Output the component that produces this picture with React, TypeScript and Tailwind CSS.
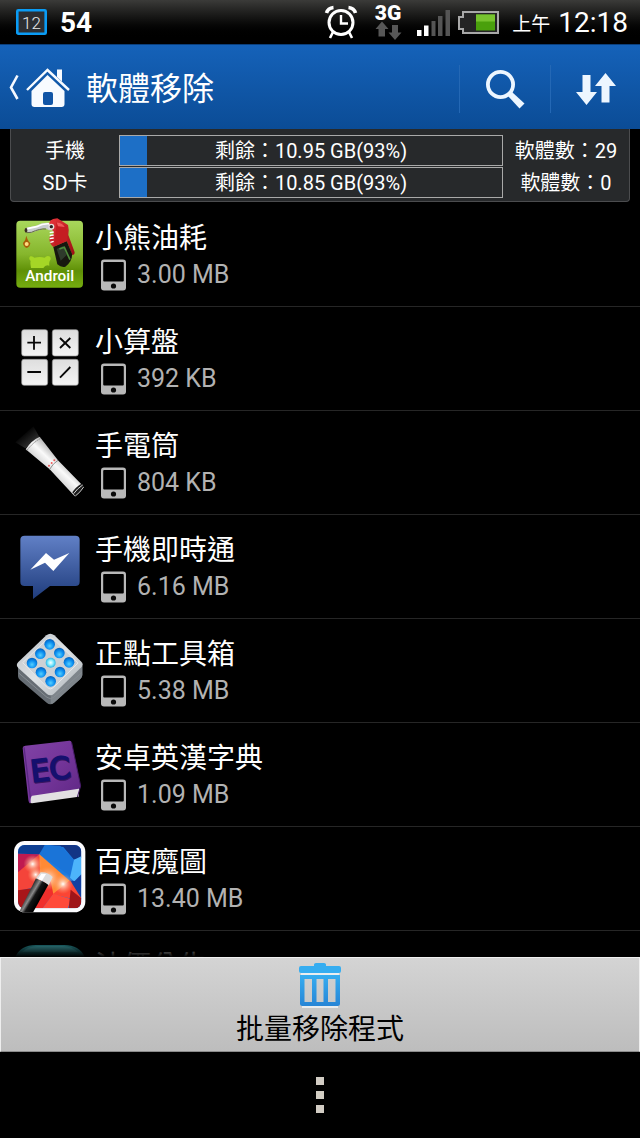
import React from 'react';

interface AppItem {
  id: string;
  name: string;
  size?: string;
  icon: React.ReactNode;
}

interface StorageItem {
  label: string;
  text: string;
  used: number;
  count: string;
}

const FuelIcon = () => (
  <svg className="h-full w-full" viewBox="42 36 216 216" aria-hidden="true">
    <defs>
      <linearGradient id="fuelBg" x1="0" y1="0" x2="0" y2="1">
        <stop offset="0" stopColor="#a9d75c" />
        <stop offset="0.5" stopColor="#86b62c" />
        <stop offset="0.75" stopColor="#5f9006" />
        <stop offset="1" stopColor="#76ad10" />
      </linearGradient>
      <linearGradient id="fuelHandle" x1="0" y1="0" x2="1" y2="1">
        <stop offset="0" stopColor="#e8343a" />
        <stop offset="1" stopColor="#9c1014" />
      </linearGradient>
    </defs>
    <rect x="49" y="47" width="200" height="201" rx="12" fill="url(#fuelBg)" />
    <path d="M93 189 Q90 172 92 168 Q84 160 91 154 Q98 152 103 158 Q120 154 134 158 Q140 151 148 154 Q156 160 149 168 Q146 175 148 182 Q136 178 130 189 Z" fill="#a5d626" />
    <path d="M77 78 Q76 68 86 67 L108 62 Q128 50 152 54 L162 60 L160 76 L146 76 Q134 64 120 74 L92 83 Z" fill="#c9cdd0" />
    <path d="M82 71 L110 65 Q130 54 152 57" stroke="#fff" strokeWidth="5" fill="none" />
    <path d="M80 83 L94 82 Q120 70 138 72" stroke="#65684e" strokeWidth="3" fill="none" />
    <ellipse cx="78" cy="76" rx="4" ry="7" fill="#3a2c24" />
    <path d="M79 92 Q83 108 91 114 Q90 126 80 129 Q70 125 69 114 Q77 107 79 92 Z" fill="#a95c08" />
    <circle cx="80" cy="117" r="6" fill="#ffdc80" />
    <path d="M150 62 Q142 42 172 40 L204 60 Q208 76 205 90 L224 142 Q224 150 217 150 L200 108 L160 126 Q148 116 148 98 L162 84 Z" fill="url(#fuelHandle)" />
    <path d="M160 126 L200 108 L216 146 Q218 168 196 185 Q184 188 172 178 Z" fill="#17170f" />
    <path d="M170 132 L190 123 L200 150 L182 167 Z" fill="#2e3a2b" />
    <path d="M178 132 L193 127 L210 164" stroke="#4d8a3b" strokeWidth="5" fill="none" />
    <path d="M170 50 L200 64 L202 108 L164 124 L166 88 Z" fill="#c51d22" />
    <path d="M170 52 Q190 56 194 66 L174 64 Z" fill="#f0595a" />
    <circle cx="154" cy="65" r="9" fill="#e5e0dc" />
    <circle cx="154" cy="65" r="5" fill="#2b2020" />
    <path d="M149 83 L161 81 M149 92 L161 90 M149 101 L161 99 M151 112 L161 109" stroke="#fff" strokeWidth="4" />
    <text x="149" y="228" textAnchor="middle" fontFamily="Roboto, sans-serif" fontWeight="500" fontSize="46" fill="#fff">Androil</text>
  </svg>
);

const CalcIcon = () => (
  <svg className="h-full w-full" viewBox="42 32 216 216" aria-hidden="true">
    <defs>
      <linearGradient id="calcKey" x1="0" y1="0" x2="0" y2="1">
        <stop offset="0" stopColor="#dedede" />
        <stop offset="1" stopColor="#f4f4f4" />
      </linearGradient>
    </defs>
    <g fill="url(#calcKey)" stroke="#9a9a9a" strokeWidth="2">
      <rect x="65" y="58" width="78" height="79" rx="7" />
      <rect x="157" y="58" width="78" height="79" rx="7" />
      <rect x="65" y="147" width="78" height="78" rx="7" />
      <rect x="157" y="147" width="78" height="78" rx="7" />
    </g>
    <path d="M82 97 H123 M102 77 V118 M180 83 L211 113 M211 83 L180 113 M82 185 H123 M180 202 L211 170" stroke="#080808" strokeWidth="5.5" fill="none" />
  </svg>
);

const TorchIcon = () => (
  <svg className="h-full w-full" viewBox="42 28 216 216" aria-hidden="true">
    <defs>
      <linearGradient id="torchBody" gradientUnits="userSpaceOnUse" x1="107" y1="160" x2="160" y2="105">
        <stop offset="0" stopColor="#7a7a7a" />
        <stop offset="0.35" stopColor="#dcdcdc" />
        <stop offset="0.65" stopColor="#fafafa" />
        <stop offset="1" stopColor="#b9b9b9" />
      </linearGradient>
      <linearGradient id="torchBeam" gradientUnits="userSpaceOnUse" x1="98" y1="80" x2="72" y2="48">
        <stop offset="0" stopColor="#2c2c2c" />
        <stop offset="1" stopColor="#000" />
      </linearGradient>
    </defs>
    <path d="M76 98 L118 63 L100 32 L46 80 Z" fill="url(#torchBeam)" />
    <path d="M77 101 Q93 75 119 63 L174 134 L250 212 Q240 232 224 242 L149 161 Z" fill="url(#torchBody)" />
    <path d="M81 104 Q98 81 122 68" stroke="#777" strokeWidth="2.5" fill="none" strokeDasharray="5 2" />
    <path d="M149 161 Q159 143 174 134" stroke="#8c8c8c" strokeWidth="3" fill="none" />
    <path d="M217 230 Q225 216 244 204 L252 213 Q242 231 226 242 Z" fill="#1a1a1a" />
    <path d="M221 234 Q231 219 248 208" stroke="#d7d7d7" strokeWidth="3" fill="none" />
    <path d="M226 241 Q241 230 251 214" stroke="#c4c4c4" strokeWidth="3" fill="none" />
    <g fill="#ee5a5a">
      <circle cx="147" cy="150" r="3" />
      <circle cx="155" cy="142" r="3" />
      <circle cx="163" cy="134" r="3" />
    </g>
  </svg>
);

const MessengerIcon = () => (
  <svg className="h-full w-full" viewBox="42 26 216 216" aria-hidden="true">
    <defs>
      <linearGradient id="chatBg" x1="0" y1="0" x2="0" y2="1">
        <stop offset="0" stopColor="#6180c6" />
        <stop offset="1" stopColor="#1f3c7c" />
      </linearGradient>
    </defs>
    <path d="M74 46 H226 Q239 46 239 58 V184 Q239 197 226 197 H150 L99 236 V197 H74 Q61 197 61 184 V58 Q61 46 74 46 Z" fill="url(#chatBg)" />
    <path d="M91 148 L138 98 L162 118 L208 98 L160 152 L135 127 Z" fill="#fff" />
  </svg>
);

const ToolboxIcon = () => (
  <svg className="h-full w-full" viewBox="42 38 216 216" aria-hidden="true">
    <defs>
      <linearGradient id="boxTop" x1="0" y1="0" x2="1" y2="1">
        <stop offset="0" stopColor="#b9bec3" />
        <stop offset="0.5" stopColor="#dfe3e6" />
        <stop offset="1" stopColor="#a9afb4" />
      </linearGradient>
      <radialGradient id="boxDot" cx="0.5" cy="0.65" r="0.6">
        <stop offset="0" stopColor="#55d0ff" />
        <stop offset="0.6" stopColor="#0c8ff0" />
        <stop offset="1" stopColor="#0466c4" />
      </radialGradient>
      <radialGradient id="boxGlow">
        <stop offset="0" stopColor="#fff" />
        <stop offset="0.5" stopColor="#8defff" />
        <stop offset="1" stopColor="#29b5e8" />
      </radialGradient>
    </defs>
    <path d="M54 136 V168 Q54 174 60 179 L140 247 Q151 256 162 247 L241 176 Q247 170 247 164 V136 Z" fill="#666d74" />
    <path d="M152 218 L247 136 V164 Q247 170 241 176 L162 247 Q157 251 152 251 Z" fill="#7e858b" />
    <path d="M56 158 L141 231 Q151 239 161 231 L246 156" stroke="#868d93" strokeWidth="3" fill="none" />
    <path d="M55 125 L139 45 Q151 36 163 45 L244 124 Q252 132 244 141 L162 220 Q151 229 140 220 L55 143 Q46 134 55 125 Z" fill="url(#boxTop)" />
    <path d="M68 127 L142 56 Q151 48 160 56 L234 128 L160 202 Q151 210 142 202 Z" fill="#ccd1d5" stroke="#e4e7ea" strokeWidth="3" />
    <g fill="url(#boxDot)">
      <circle cx="149" cy="72" r="16" />
      <circle cx="121" cy="100" r="16" />
      <circle cx="178" cy="98" r="16" />
      <circle cx="96" cy="128" r="16" />
      <circle cx="207" cy="126" r="16" />
      <circle cx="123" cy="156" r="16" />
      <circle cx="180" cy="155" r="16" />
      <circle cx="152" cy="183" r="16" />
    </g>
    <circle cx="152" cy="127" r="15" fill="url(#boxGlow)" />
  </svg>
);

const DictionaryIcon = () => (
  <svg className="h-full w-full" viewBox="42 33 216 216" aria-hidden="true">
    <defs>
      <linearGradient id="bookCover" x1="0" y1="0" x2="1" y2="1">
        <stop offset="0" stopColor="#8143a6" />
        <stop offset="0.5" stopColor="#743599" />
        <stop offset="1" stopColor="#5d2683" />
      </linearGradient>
    </defs>
    <path d="M89 207 L238 184 L236 212 L96 232 Q88 232 88 222 Z" fill="#e2e0e2" />
    <path d="M68 66 Q68 60 76 59 L208 44 Q214 43 215 50 L242 180 Q242 187 236 188 L97 209 Q91 211 92 232 Q87 233 85 222 Z" fill="url(#bookCover)" />
    <path d="M72 64 L91 214" stroke="#5c2884" strokeWidth="4" fill="none" />
    <path d="M215 50 L242 180 L232 213" stroke="#451b66" strokeWidth="3" fill="none" />
    <g fontFamily="'DejaVu Sans', sans-serif" fontSize="90" strokeWidth="5">
      <text x="98" y="172" fill="#3a1560" stroke="#3a1560" transform="rotate(-7 98 172)">EC</text>
      <text x="95" y="169" fill="#15106f" stroke="#15106f" transform="rotate(-7 95 169)">EC</text>
    </g>
  </svg>
);

const MagicIcon = () => (
  <svg className="h-full w-full" viewBox="42 30 216 216" aria-hidden="true">
    <defs>
      <radialGradient id="spark">
        <stop offset="0" stopColor="#fff" />
        <stop offset="0.25" stopColor="#ffd9c4" stopOpacity="0.8" />
        <stop offset="1" stopColor="#ff9a66" stopOpacity="0" />
      </radialGradient>
      <linearGradient id="wand" gradientUnits="userSpaceOnUse" x1="80" y1="180" x2="120" y2="204">
        <stop offset="0" stopColor="#050505" />
        <stop offset="0.4" stopColor="#8a8a8a" />
        <stop offset="0.6" stopColor="#151515" />
        <stop offset="1" stopColor="#000" />
      </linearGradient>
      <clipPath id="magicClip">
        <rect x="54" y="42" width="190" height="190" rx="20" />
      </clipPath>
      <clipPath id="magicOuter">
        <rect x="42" y="30" width="214" height="214" rx="32" />
      </clipPath>
    </defs>
    <rect x="42" y="30" width="214" height="214" rx="32" fill="#fbfbfd" />
    <g clipPath="url(#magicClip)">
      <rect x="54" y="42" width="190" height="190" fill="#1c7be0" />
      <path d="M54 42 H140 L118 70 L54 68 Z" fill="#0e3f93" />
      <path d="M140 42 H244 V80 L222 86 L190 48 Z" fill="#123585" />
      <path d="M118 70 L134 42 L180 44 L222 86 L210 134 Z" fill="#1a74d8" />
      <path d="M222 86 L244 76 V170 L210 140 Z" fill="#4db4fb" />
      <path d="M224 150 L244 130 V206 L200 148 Z" fill="#1340a0" />
      <path d="M54 68 L118 70 L54 130 Z" fill="#c01a50" />
      <path d="M118 70 L54 124 V180 L92 172 L150 130 Z" fill="#f4443a" />
      <path d="M118 70 L210 150 L158 194 L120 130 Z" fill="#ff8a35" />
      <path d="M54 178 L96 172 L70 232 H54 Z" fill="#a81519" />
      <path d="M96 172 L150 140 L160 190 L128 232 H70 Z" fill="#f02f2c" />
      <path d="M158 190 L210 148 L244 202 L208 202 Z" fill="#fb4534" />
      <path d="M128 232 L160 188 L212 204 L204 232 Z" fill="#ff4a3a" />
      <path d="M206 232 L212 176 L244 202 V232 Z" fill="#9f1519" />
      <circle cx="98" cy="99" r="28" fill="url(#spark)" />
      <circle cx="107" cy="131" r="24" fill="url(#spark)" />
      <circle cx="189" cy="159" r="30" fill="url(#spark)" />
      <circle cx="144" cy="142" r="36" fill="url(#spark)" />
    </g>
    <g clipPath="url(#magicOuter)">
      <path d="M108 142 L146 160 L98 246 L56 246 Z" fill="url(#wand)" />
      <path d="M108 142 L122 124 Q142 122 158 138 L146 163 Q130 148 108 142 Z" fill="#dcdcdc" />
      <path d="M124 128 L114 144 L126 149 L138 129 Z" fill="#fff" />
    </g>
  </svg>
);

const OilPriceIcon = () => (
  <svg className="h-full w-full" viewBox="0 2 72 72" aria-hidden="true">
    <path d="M0 18 Q4 2 22 2 H50 Q68 2 72 18 V74 H0 Z" fill="#2a949c" />
    <path d="M8 9 Q14 3 24 3 H48 Q58 3 64 9 Z" fill="#46b4bb" />
  </svg>
);

const PhoneIcon = () => (
  <svg className="h-8 w-7 shrink-0" viewBox="0 0 28 32" aria-hidden="true">
    <rect x="2" y="0.5" width="25" height="31" rx="3" fill="#b8b8b8" />
    <rect x="4.200" y="3" width="20.600" height="19.500" rx="1" fill="#000" />
    <circle cx="14.500" cy="27" r="2.600" fill="#0a0a0a" />
  </svg>
);

const apps: AppItem[] = [
  { id: 'fuel', name: '小熊油耗', size: '3.00 MB', icon: <FuelIcon /> },
  { id: 'calc', name: '小算盤', size: '392 KB', icon: <CalcIcon /> },
  { id: 'torch', name: '手電筒', size: '804 KB', icon: <TorchIcon /> },
  { id: 'messenger', name: '手機即時通', size: '6.16 MB', icon: <MessengerIcon /> },
  { id: 'toolbox', name: '正點工具箱', size: '5.38 MB', icon: <ToolboxIcon /> },
  { id: 'dictionary', name: '安卓英漢字典', size: '1.09 MB', icon: <DictionaryIcon /> },
  { id: 'magic', name: '百度魔圖', size: '13.40 MB', icon: <MagicIcon /> },
  { id: 'oil', name: '油價公告', icon: <OilPriceIcon /> },
];

const storages: StorageItem[] = [
  { label: '手機', text: '剩餘：10.95 GB(93%)', used: 7, count: '軟體數：29' },
  { label: 'SD卡', text: '剩餘：10.85 GB(93%)', used: 7, count: '軟體數：0' },
];

const StatusBar = () => (
  <div className="flex h-11 shrink-0 items-center justify-between bg-linear-to-b from-[#3b3b39] to-black to-90% pr-3 pl-4">
    <div className="flex items-center gap-3">
      <svg className="h-7 w-8" viewBox="0 0 32 28" aria-hidden="true">
        <rect x="1.3" y="2.3" width="28.4" height="23.4" rx="1" fill="#2c2f33" stroke="#0a9cf5" strokeWidth="2.6" />
        <text x="15.5" y="20.5" textAnchor="middle" fontFamily="Roboto, sans-serif" fontWeight="300" fontSize="17" fill="#e8e8e8">12</text>
      </svg>
      <span className="pt-0.5 text-[28px] leading-8 font-bold">54</span>
    </div>
    <div className="flex items-center">
      <svg className="h-11 w-49" viewBox="0 -4 196 44" aria-hidden="true">
        {/* alarm */}
        <g fill="none" stroke="#fff">
          <circle cx="25" cy="18.5" r="12" strokeWidth="3" />
          <path d="M25 11 V19.5 H32" strokeWidth="2.4" />
          <path d="M17 28 L14 34 M33 28 L36 34" strokeWidth="2.6" />
          <path d="M10.500 9 Q12 4 17.500 3.500 M39.500 9 Q38 4 32.500 3.500" strokeWidth="3.600" />
        </g>
        {/* network */}
        <text x="72" y="16" textAnchor="middle" fontFamily="Roboto, sans-serif" fontWeight="900" fontSize="21" fill="#fff">3G</text>
        <path d="M66 17.500 L72.500 25 H69 V32.500 H62.500 V25 H59.500 Z M79 36 L72.500 28.500 H76 V21 H82 V28.500 H85.500 Z" fill="#575757" />
        {/* signal */}
        <path d="M101 26 H105.500 V32 H101 Z M108 21.500 H112.500 V32 H108 Z" fill="#fff" />
        <path d="M115.500 17 H119.500 V32 H115.500 Z M122 12 H126.500 V32 H122 Z M129.500 6 H134 V32 H129.500 Z" fill="#555" />
        {/* battery */}
        <path d="M147 8 H182 V29 H147 V25 H143 V13 H147 Z" fill="#242424" stroke="#a8a8a8" strokeWidth="2" />
        <rect x="160" y="10.500" width="19" height="16" fill="#4aa00c" />
        <rect x="160" y="10.500" width="19" height="7" fill="#77c32f" />
      </svg>
      <span className="pt-1.5 text-[19px] leading-8">上午</span>
      <span className="ml-2 pt-0.5 text-[28px] leading-8">12:18</span>
    </div>
  </div>
);

const Header = () => (
  <header className="flex h-[85px] shrink-0 items-center border-t border-[#0b3f7c] bg-linear-to-b from-[#1562b9] to-[#0b4c96] pt-1">
    <button type="button" aria-label="首頁" className="h-11 pl-2">
      <svg className="h-11 w-16" viewBox="0 2 64 44" aria-hidden="true">
        <path d="M9.500 10.500 L3 22.500 L9.500 34" fill="none" stroke="#f4f8ff" strokeWidth="2.600" />
        <path d="M23.500 26 L39.500 10 L56.500 26 V39 Q56.500 42 53.500 42 H26.500 Q23.500 42 23.500 39 Z" fill="#f8fbff" />
        <path d="M19 25 L39.500 5 L61 25" fill="none" stroke="#f8fbff" strokeWidth="2.400" />
        <path d="M49 4.500 H54 V16.500 L49 12 Z" fill="#f8fbff" />
        <rect x="35" y="27" width="10" height="13" rx="2" fill="#1155a6" />
      </svg>
    </button>
    <h1 className="ml-3.5 flex-1 text-[32px] leading-10">軟體移除</h1>
    <button type="button" aria-label="搜尋" className="flex h-12 w-[91px] items-center justify-center border-l border-[#2468b5]">
      <svg className="h-10 w-10" viewBox="0 0 40 40" aria-hidden="true">
        <circle cx="15.500" cy="15.500" r="12.600" fill="none" stroke="#edf6ff" strokeWidth="3.800" />
        <path d="M23 27 L27 23 L39.500 34.500 L34.500 39.500 Z" fill="#edf6ff" />
      </svg>
    </button>
    <button type="button" aria-label="排序" className="flex h-12 w-[90px] items-center justify-center border-l border-[#2468b5]">
      <svg className="h-8 w-10" viewBox="0 0 40 32" aria-hidden="true">
        <path d="M6.500 2 H14.500 V19 H21 L10.500 32 L0 19 H6.500 Z M29.500 0 L40 13 H33.500 V29.500 H25.500 V13 H19 Z" fill="#edf6ff" />
      </svg>
    </button>
  </header>
);

const StoragePanel = () => (
  <section className="mx-2.5 mb-px shrink-0 rounded-b-sm border border-t-0 border-[#4b4c4e] bg-[#27292b] pt-1.5 pb-[3px]">
    <div className="flex flex-col gap-px text-[20px] leading-7">
      {storages.map((item) => (
        <div key={item.label} className="grid grid-cols-[108px_1fr_126px] items-center text-center">
          <span>{item.label}</span>
          <div
            role="progressbar"
            aria-label={item.label}
            aria-valuenow={item.used}
            className="grid h-[31px] border border-[#a9a9a9]"
          >
            <div className="col-start-1 row-start-1 bg-[#1d6fc6]" style={{ width: `${item.used}%` }} />
            <span className="col-start-1 row-start-1 pt-px">{item.text}</span>
          </div>
          <span>{item.count}</span>
        </div>
      ))}
    </div>
  </section>
);

export default function App() {
  return (
    <div
      lang="zh-TW"
      className="flex h-screen flex-col overflow-hidden bg-black font-['Roboto','Noto_Sans_CJK_TC',sans-serif] text-white"
    >
      <StatusBar />
      <Header />
      <StoragePanel />

      <main className="relative min-h-0 flex-1 overflow-hidden">
        <ul>
          {apps.map((app) => (
            <li key={app.id} className="h-[104px] border-b border-[#262626]">
              <button type="button" className="flex h-full w-full items-start pl-3.5 text-left">
                <span className="mt-3.5 size-[72px] shrink-0">{app.icon}</span>
                <span className="ml-[9px] flex flex-col pt-[18px]">
                  <span className="text-[28px] leading-9">{app.name}</span>
                  {app.size && (
                    <span className="ml-1 flex h-9 items-center gap-2.5">
                      <PhoneIcon />
                      <span className="text-[25px] leading-8 text-[#b2b2b2]">{app.size}</span>
                    </span>
                  )}
                </span>
              </button>
            </li>
          ))}
        </ul>
        <div className="pointer-events-none absolute inset-x-0 bottom-0 h-5 bg-linear-to-b from-transparent to-black" />
      </main>

      <button
        type="button"
        className="flex h-[95px] shrink-0 flex-col items-center border border-t-[#f0f0f0] border-r-[#eeeeee] border-b-[#8c8c8c] border-l-[#eeeeee] bg-linear-to-b from-[#d4d4d4] to-[#bdbdbd] pt-1 text-black"
      >
        <svg className="h-[46px] w-11 shrink-0" viewBox="0 0 44 46" aria-hidden="true">
          <defs>
            <linearGradient id="trash" x1="0" y1="0" x2="0" y2="1">
              <stop offset="0" stopColor="#36adf0" />
              <stop offset="1" stopColor="#2785d6" />
            </linearGradient>
          </defs>
          <path d="M3 12 H41 M4 45 H40" stroke="#f4f8fa" strokeWidth="1.500" />
          <path d="M16 4 V2.500 Q16 1 18 1 H26 Q28 1 28 2.500 V4 H41 Q43 4 43 6 V9 Q43 11 41 11 H3 Q1 11 1 9 V6 Q1 4 3 4 Z" fill="#36adf0" />
          <path
            fillRule="evenodd"
            d="M2 13 H42 V41.500 Q42 44 39.500 44 H4.500 Q2 44 2 41.500 Z M6.500 17 V40 H14 V17 Z M18.500 17 V40 H25.500 V17 Z M30 17 V40 H37.500 V17 Z"
            fill="url(#trash)"
          />
        </svg>
        <span className="mt-1 text-[28px] leading-9">批量移除程式</span>
      </button>

      <nav className="flex h-[86px] shrink-0 items-center justify-center">
        <button type="button" aria-label="選單" className="flex flex-col gap-1.5 px-6 py-2">
          <span className="size-2 bg-[#d2cdc4]" />
          <span className="size-2 bg-[#d2cdc4]" />
          <span className="size-2 bg-[#d2cdc4]" />
        </button>
      </nav>
    </div>
  );
}
